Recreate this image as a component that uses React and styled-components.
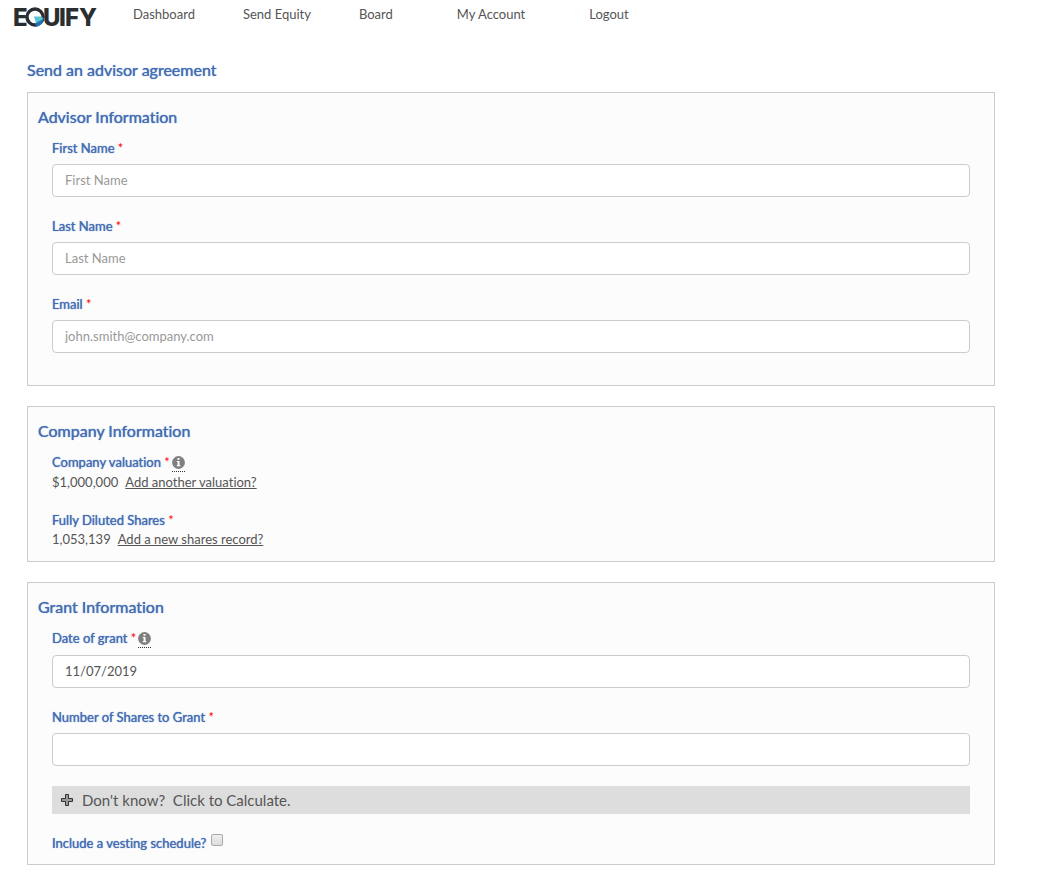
import React, { useState } from 'react';
import styled, { createGlobalStyle } from 'styled-components';

const GlobalStyle = createGlobalStyle`
  * {
    box-sizing: border-box;
  }

  body {
    margin: 0;
    background: #fff;
    color: #555;
    font-family: Lato, sans-serif;
    font-size: 13px;
    font-variant-ligatures: none;
  }
`;

const links = [
  { text: 'Dashboard' },
  { text: 'Send Equity' },
  { text: 'Board' },
  { text: 'My Account', wide: true },
  { text: 'Logout' },
];

const Logo = () => (
  <LogoMark viewBox="0 0 90 30" role="img" aria-label="Equify">
    <g fill="#2b2e30" fontFamily="Inter, sans-serif" fontWeight="800" fontSize="24">
      <text x="0" y="24">E</text>
      <text x="30" y="24">U</text>
      <text x="46" y="24">I</text>
      <text x="52" y="24">F</text>
      <text x="66" y="24">Y</text>
    </g>
    <circle cx="22" cy="15" r="8" fill="#fff" stroke="#2b2e30" strokeWidth="3.4" />
    <path d="M23 20L31 15.500A10 10 0 0 1 22.500 25Z" fill="#1c75bc" />
    <path d="M21 14.500H29L30 17L23 21Z" fill="#5cc6d0" />
  </LogoMark>
);

const Info = () => (
  <InfoMark title="More information">
    <svg width="13" height="13" viewBox="0 0 13 13" aria-hidden="true">
      <circle cx="6.5" cy="6.5" r="6.4" fill="#808080" />
      <path d="M5.5 2h2v1.7h-2zM4.8 5h2.7v4h.8v1.2H4.8V9h.8V6.1h-.8z" fill="#fff" />
    </svg>
  </InfoMark>
);

const Field = ({ id, label, info, ...input }) => (
  <FieldGroup>
    <Label htmlFor={id} $tall={info}>
      {label} <Star>*</Star>
      {info && <Info />}
    </Label>
    <Input id={id} {...input} />
  </FieldGroup>
);

const Record = ({ label, value, action, info }) => (
  <div>
    <Term $tall={info}>
      {label} <Star>*</Star>
      {info && <Info />}
    </Term>
    <Value>
      {value}
      <a href="#">{action}</a>
    </Value>
  </div>
);

const App = () => {
  const [vesting, setVesting] = useState(false);

  return (
    <>
      <GlobalStyle />
      <Nav>
        <Logo />
        {links.map(({ text, wide }) => (
          <NavLink href="#" key={text} $wide={wide}>{text}</NavLink>
        ))}
      </Nav>
      <Main>
        <PageTitle>Send an advisor agreement</PageTitle>

        <Panel $bottom={32}>
          <PanelTitle>Advisor Information</PanelTitle>
          <Fields>
            <Field id="first" label="First Name" placeholder="First Name" />
            <Field id="last" label="Last Name" placeholder="Last Name" />
            <Field id="email" type="email" label="Email" placeholder="john.smith@company.com" />
          </Fields>
        </Panel>

        <Panel $bottom={13}>
          <PanelTitle>Company Information</PanelTitle>
          <Fields>
            <Record label="Company valuation" value="$1,000,000" action="Add another valuation?" info />
            <Record label="Fully Diluted Shares" value="1,053,139" action="Add a new shares record?" />
          </Fields>
        </Panel>

        <Panel $bottom={12}>
          <PanelTitle>Grant Information</PanelTitle>
          <Fields>
            <Field id="date" label="Date of grant" defaultValue="11/07/2019" info />
            <Field id="shares" label="Number of Shares to Grant" />
            <Calculate type="button">
              <svg width="12" height="12" viewBox="0 0 12 12" aria-hidden="true">
                <path d="M4.5.5h3v4h4v3h-4v4h-3v-4h-4v-3h4z" fill="#999" stroke="#333" />
              </svg>
              Don't know?&nbsp; Click to Calculate.
            </Calculate>
            <CheckRow>
              <Label htmlFor="vesting">Include a vesting schedule?</Label>
              <Checkbox
                id="vesting"
                type="checkbox"
                checked={vesting}
                onChange={e => setVesting(e.target.checked)}
              />
            </CheckRow>
          </Fields>
        </Panel>
      </Main>
    </>
  );
};

export default App;

const Nav = styled.nav`
  display: flex;
  align-items: flex-start;
  padding: 2px 13px 0;
`;

const LogoMark = styled.svg`
  width: 90px;
  height: 30px;
  margin-right: 6px;
`;

const NavLink = styled.a`
  margin-top: 3px;
  padding: 0 ${props => (props.$wide ? 40 : 24)}px;
  color: #555;
  line-height: 18px;
  text-decoration: none;
`;

const Main = styled.main`
  padding: 27px 52px 15px 27px;
`;

const PageTitle = styled.h1`
  margin: 0 0 11px;
  color: #446cb3;
  font-size: 16px;
  font-weight: 400;
  line-height: 22px;
  text-shadow: 0 0 1px #446cb3;
`;

const Panel = styled.section`
  margin-bottom: 20px;
  padding: 13px 10px ${props => props.$bottom}px;
  border: 1px solid #ccc;
  background: #fcfcfc;
`;

const PanelTitle = styled.h2`
  margin: 0 0 11px;
  color: #446cb3;
  font-size: 16px;
  font-weight: 400;
  line-height: 22px;
  text-shadow: 0 0 1px #446cb3;
`;

const Fields = styled.div`
  display: flex;
  flex-direction: column;
  gap: 20px;
  margin: 0 14px;
`;

const FieldGroup = styled.div`
  display: flex;
  flex-direction: column;
  gap: 7px;
`;

const Label = styled.label`
  display: block;
  height: ${props => (props.$tall ? 19 : 18)}px;
  color: #446cb3;
  line-height: 18px;
  text-shadow: 0 0 1px #446cb3;
`;

const Term = styled(Label).attrs({ as: 'div' })``;

const Star = styled.span`
  color: red;
  text-shadow: none;
`;

const InfoMark = styled.span`
  display: inline-block;
  height: 19px;
  margin-left: 2px;
  padding-top: 3px;
  border-bottom: 1px dotted #333;
  vertical-align: top;

  svg {
    display: block;
  }
`;

const Input = styled.input`
  width: 100%;
  height: 33px;
  padding: 0 12px 1px;
  border: 1px solid #ccc;
  border-radius: 4px;
  background: #fff;
  color: #555;
  font: inherit;

  &::placeholder {
    color: #999;
  }
`;

const Value = styled.div`
  padding-top: 1px;
  line-height: 18px;

  a {
    margin-left: 7px;
    color: #555;
  }
`;

const Calculate = styled.button`
  display: flex;
  align-items: center;
  gap: 9px;
  height: 28px;
  padding: 0 9px;
  border: 0;
  background: #ddd;
  color: #555;
  font: inherit;
  font-size: 15px;
`;

const CheckRow = styled.div`
  display: flex;
  gap: 5px;
`;

const Checkbox = styled.input`
  appearance: none;
  width: 12px;
  height: 12px;
  margin: 0;
  border: 1px solid #aaa;
  border-radius: 2px;
  background: linear-gradient(#eee, #ddd);

  &:checked {
    background: #446cb3;
  }
`;
